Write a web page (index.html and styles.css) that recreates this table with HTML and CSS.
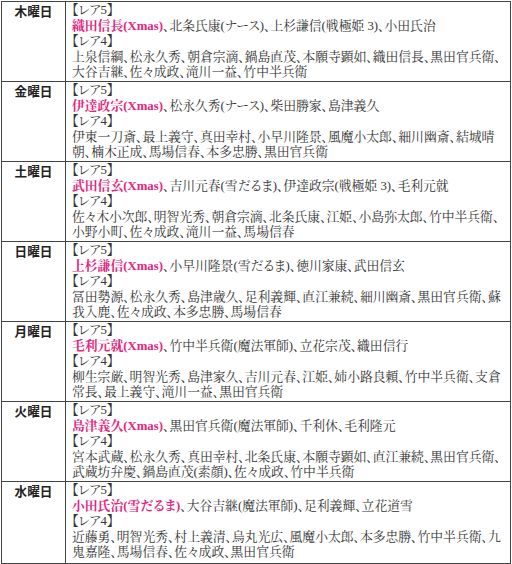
FILE: index.html
```html
<!DOCTYPE html>
<html lang="ja">
<head>
<meta charset="utf-8">
<link rel="stylesheet" href="styles.css">
</head>
<body>
<div class="schedule">
  <div class="row">
    <div class="day">木曜日</div>
    <div class="list">
      <div class="line">【レア5】</div>
      <div class="line"><span class="hl">織田信長(Xmas)</span>、北条氏康(ナース)、上杉謙信(戦極姫 3)、小田氏治</div>
      <div class="line">【レア4】</div>
      <div class="line">上泉信綱、松永久秀、朝倉宗滴、鍋島直茂、本願寺顕如、織田信長、黒田官兵衛、</div>
      <div class="line">大谷吉継、佐々成政、滝川一益、竹中半兵衛</div>
    </div>
  </div>
  <div class="row">
    <div class="day">金曜日</div>
    <div class="list">
      <div class="line">【レア5】</div>
      <div class="line"><span class="hl">伊達政宗(Xmas)</span>、松永久秀(ナース)、柴田勝家、島津義久</div>
      <div class="line">【レア4】</div>
      <div class="line">伊東一刀斎、最上義守、真田幸村、小早川隆景、風魔小太郎、細川幽斎、結城晴</div>
      <div class="line">朝、楠木正成、馬場信春、本多忠勝、黒田官兵衛</div>
    </div>
  </div>
  <div class="row">
    <div class="day">土曜日</div>
    <div class="list">
      <div class="line">【レア5】</div>
      <div class="line"><span class="hl">武田信玄(Xmas)</span>、吉川元春(雪だるま)、伊達政宗(戦極姫 3)、毛利元就</div>
      <div class="line">【レア4】</div>
      <div class="line">佐々木小次郎、明智光秀、朝倉宗滴、北条氏康、江姫、小島弥太郎、竹中半兵衛、</div>
      <div class="line">小野小町、佐々成政、滝川一益、馬場信春</div>
    </div>
  </div>
  <div class="row">
    <div class="day">日曜日</div>
    <div class="list">
      <div class="line">【レア5】</div>
      <div class="line"><span class="hl">上杉謙信(Xmas)</span>、小早川隆景(雪だるま)、徳川家康、武田信玄</div>
      <div class="line">【レア4】</div>
      <div class="line">冨田勢源、松永久秀、島津歳久、足利義輝、直江兼続、細川幽斎、黒田官兵衛、蘇</div>
      <div class="line">我入鹿、佐々成政、本多忠勝、馬場信春</div>
    </div>
  </div>
  <div class="row">
    <div class="day">月曜日</div>
    <div class="list">
      <div class="line">【レア5】</div>
      <div class="line"><span class="hl">毛利元就(Xmas)</span>、竹中半兵衛(魔法軍師)、立花宗茂、織田信行</div>
      <div class="line">【レア4】</div>
      <div class="line">柳生宗厳、明智光秀、島津家久、吉川元春、江姫、姉小路良頼、竹中半兵衛、支倉</div>
      <div class="line">常長、最上義守、滝川一益、黒田官兵衛</div>
    </div>
  </div>
  <div class="row">
    <div class="day">火曜日</div>
    <div class="list">
      <div class="line">【レア5】</div>
      <div class="line"><span class="hl">島津義久(Xmas)</span>、黒田官兵衛(魔法軍師)、千利休、毛利隆元</div>
      <div class="line">【レア4】</div>
      <div class="line">宮本武蔵、松永久秀、真田幸村、北条氏康、本願寺顕如、直江兼続、黒田官兵衛、</div>
      <div class="line">武蔵坊弁慶、鍋島直茂(素顔)、佐々成政、竹中半兵衛</div>
    </div>
  </div>
  <div class="row">
    <div class="day">水曜日</div>
    <div class="list">
      <div class="line">【レア5】</div>
      <div class="line"><span class="hl">小田氏治(雪だるま)</span>、大谷吉継(魔法軍師)、足利義輝、立花道雪</div>
      <div class="line">【レア4】</div>
      <div class="line">近藤勇、明智光秀、村上義清、烏丸光広、風魔小太郎、本多忠勝、竹中半兵衛、九</div>
      <div class="line">鬼嘉隆、馬場信春、佐々成政、黒田官兵衛</div>
    </div>
  </div>
</div>
</body>
</html>
```
FILE: styles.css
```css
html, body {
  margin: 0;
  padding: 0;
  background: #ffffff;
}
body {
  padding: 1px;
}
.schedule {
  width: 510px;
  box-sizing: border-box;
  border: 1px solid #444;
  display: flex;
  flex-direction: column;
}
.row {
  display: flex;
  height: 80px;
  box-sizing: border-box;
  border-bottom: 1px solid #444;
}
.row:last-child {
  border-bottom: none;
  height: 81px;
}
.day {
  width: 63px;
  flex: none;
  border-right: 1px solid #444;
  text-align: center;
  font-family: "Noto Sans CJK JP", sans-serif;
  font-weight: bold;
  font-size: 12.6px;
  line-height: 15.6px;
  padding-top: 1px;
  color: #222;
  font-feature-settings: "palt";
}
.list {
  flex: 1;
  padding: 1px 0 0 6px;
  font-family: "Liberation Serif", "Noto Serif CJK JP", "Noto Sans CJK JP", serif;
  font-size: 12.8px;
  line-height: 15.6px;
  color: #333;
  font-feature-settings: "palt";
}
.line {
  white-space: nowrap;
}
.hl {
  color: #e4257d;
  font-weight: bold;
}
```
